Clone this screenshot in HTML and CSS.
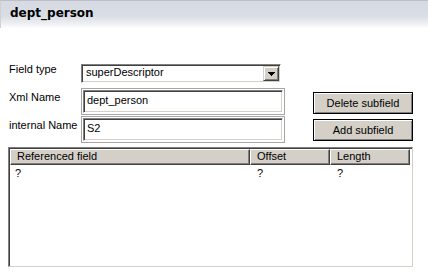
FILE: index.html
```html
<!DOCTYPE html>
<html>
<head>
<meta charset="utf-8">
<link rel="stylesheet" href="styles.css">
</head>
<body>
<div class="titlebar">dept_person</div>
<div class="form">
  <div class="lbl lbl-first">Field type</div>
  <div class="combo">
    <span class="combo-text">superDescriptor</span>
    <span class="combo-btn">
      <svg width="7" height="4" viewBox="0 0 7 4" shape-rendering="crispEdges"><rect x="0" y="0" width="7" height="1" fill="#000"/><rect x="1" y="1" width="5" height="1" fill="#000"/><rect x="2" y="2" width="3" height="1" fill="#000"/><rect x="3" y="3" width="1" height="1" fill="#000"/></svg>
    </span>
  </div>
  <div class="spacer"></div>
  <div class="spacer"></div>

  <div class="lbl">Xml Name</div>
  <div class="field"><div class="field-inner">dept_person</div></div>
  <div class="spacer"></div>
  <button class="btn btn-first">Delete subfield</button>

  <div class="lbl">internal Name</div>
  <div class="field"><div class="field-inner">S2</div></div>
  <div class="spacer"></div>
  <button class="btn">Add subfield</button>
</div>
<div class="grid-wrap">
  <div class="thead">
    <div class="th">Referenced field</div>
    <div class="th">Offset</div>
    <div class="th">Length</div>
  </div>
  <div class="tr">
    <div class="td td-first">?</div>
    <div class="td">?</div>
    <div class="td">?</div>
  </div>
</div>
</body>
</html>
```

FILE: styles.css
```css
html, body {
  margin: 0;
  padding: 0;
  background: #fff;
}
body {
  font-family: "Liberation Sans", Arial, sans-serif;
  font-size: 11px;
  color: #000;
}
.titlebar {
  box-sizing: border-box;
  height: 28px;
  border-top: 1px solid #c0bdc6;
  border-left: 1px solid #cfd0d4;
  background: linear-gradient(to bottom, #d6dae2 0%, #d9dde4 55%, #eceef1 82%, #fdfdfd 100%);
  padding: 5px 0 0 9px;
  font-family: "DejaVu Sans", sans-serif;
  font-weight: bold;
  font-size: 12px;
  line-height: 14px;
}
.form {
  display: grid;
  grid-template-columns: 72px 204px 28px 100px;
  grid-template-rows: 25px 28px 28px;
  padding: 35px 0 0 9px;
}
.lbl {
  line-height: 13px;
  padding-top: 3px;
  white-space: nowrap;
}
.lbl-first {
  padding-top: 0;
}
.combo {
  margin-top: 1px;
  width: 200px;
  height: 19px;
  box-sizing: border-box;
  border: 1px solid;
  border-color: #808080 #fff #fff #808080;
  box-shadow: inset 1px 1px #404040, inset -1px -1px #d4d0c8;
  padding: 1px;
  background: #fff;
  display: flex;
}
.combo-text {
  flex: 1;
  line-height: 13px;
  padding-left: 3px;
}
.combo-btn {
  width: 16px;
  height: 15px;
  box-sizing: border-box;
  background: #d4d0c8;
  border: 1px solid;
  border-color: #d4d0c8 #404040 #404040 #d4d0c8;
  box-shadow: inset 1px 1px #fff, inset -1px -1px #808080;
  display: flex;
  align-items: center;
  justify-content: center;
}
.combo-btn svg {
  display: block;
}
.field {
  width: 204px;
  height: 27px;
  box-sizing: border-box;
  border: 1px solid #a6a6a6;
  padding: 1px;
  background: #fff;
}
.field-inner {
  height: 100%;
  box-sizing: border-box;
  border: 1px solid;
  border-color: #808080 #fff #fff #808080;
  box-shadow: inset 1px 1px #404040, inset -1px -1px #d4d0c8;
  padding: 1px 3px;
  line-height: 16px;
}
.btn {
  align-self: start;
  margin-top: 3px;
  width: 100px;
  height: 22px;
  box-sizing: border-box;
  border: 1px solid #000;
  background: #d4d0c8;
  box-shadow: inset 1px 1px #fff, inset -1px -1px #808080;
  font-family: "Liberation Sans", Arial, sans-serif;
  font-size: 11px;
  color: #000;
  padding: 0;
}
.btn-first {
  margin-top: 4px;
}
.grid-wrap {
  margin: 3px 0 0 8px;
  width: 405px;
  height: 120px;
  box-sizing: border-box;
  border: 1px solid;
  border-color: #808080 #d4d0c8 #d4d0c8 #808080;
  box-shadow: inset 1px 1px #404040, inset -1px -1px #fff;
  padding: 1px;
  background: #fff;
}
.thead, .tr {
  display: grid;
  grid-template-columns: 240px 80px 80px;
}
.th {
  height: 16px;
  box-sizing: border-box;
  background: #d4d0c8;
  border: 1px solid;
  border-color: #fff #404040 #404040 #fff;
  box-shadow: inset -1px -1px #808080;
  padding-left: 6px;
  line-height: 13px;
  white-space: nowrap;
}
.td {
  padding: 2px 0 0 7px;
  line-height: 13px;
}
.td-first {
  padding-left: 5px;
}
```
